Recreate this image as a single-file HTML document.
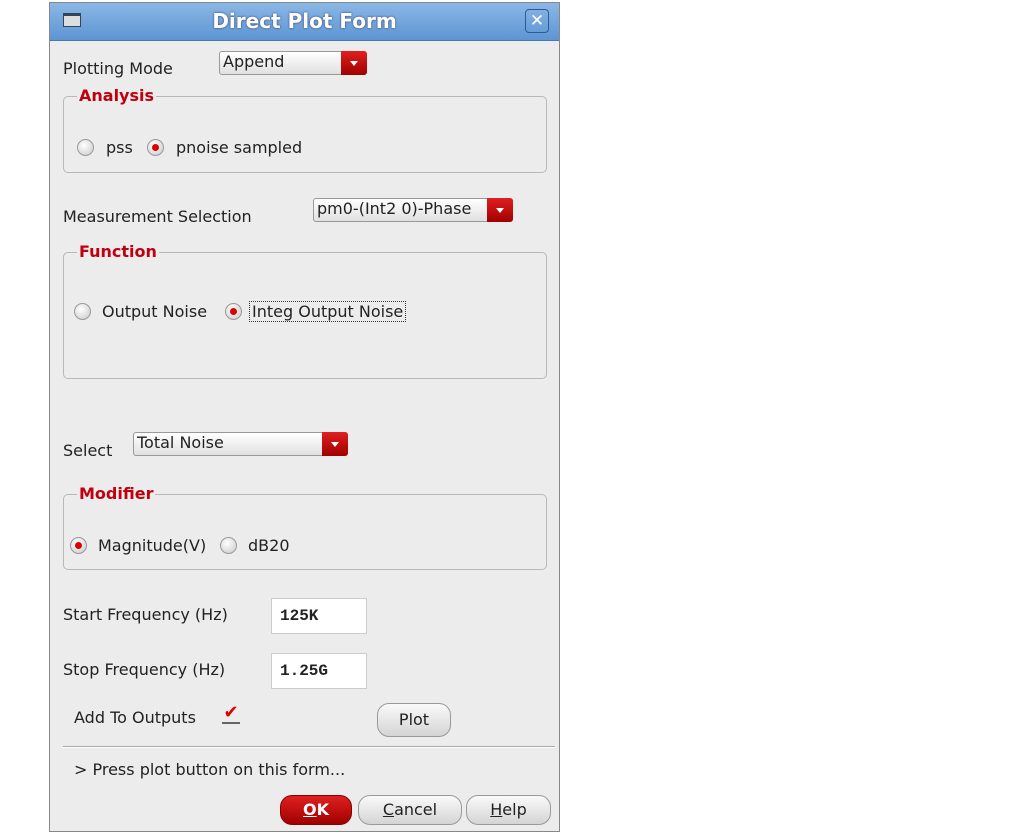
<!DOCTYPE html>
<html><head><style>
body{margin:0;width:1013px;height:840px;background:#fff;position:relative;font-family:"DejaVu Sans","Liberation Sans",sans-serif;font-size:16px;color:#222;overflow:hidden}
.a{position:absolute}
#win{left:49px;top:2px;width:511px;height:830px;background:#ececec;border:1px solid #888;box-sizing:border-box}
#title{left:50px;top:3px;width:509px;height:37px;background:linear-gradient(#8ab7e6,#5d95d3);border-bottom:1px solid #4a78b0}
.lbl{white-space:nowrap}
.grp{border:1px solid #b8b8b8;border-radius:5px}
.gt{color:#c00010;font-weight:bold;background:#ececec;padding:0 2px}
.combo{border:1px solid #999;border-radius:3px;background:linear-gradient(#fff,#e0e0e0);height:24px;box-sizing:border-box;padding-left:3px;line-height:20px}
.combo .ar{position:absolute;right:-1px;top:-1px;width:26px;height:24px;background:linear-gradient(#e02020,#a00000);border-radius:0 3px 3px 0}
.combo .ar:after{content:"";position:absolute;left:9px;top:10px;border:4px solid transparent;border-top:5px solid #fff}
.rad{width:17px;height:17px;border-radius:50%;border:1px solid #999;background:radial-gradient(circle at 40% 35%,#fff,#c8c8c8);box-sizing:border-box}
.rad.on:after{content:"";position:absolute;left:4px;top:4px;width:7px;height:7px;border-radius:50%;background:#d00}
.inp{background:#fff;border:1px solid #ccc;font-family:"Liberation Mono",monospace;font-weight:bold;font-size:16px;padding-left:8px;line-height:34px;box-sizing:border-box}
.btn{border:1px solid #999;border-radius:12px;background:linear-gradient(#fafafa,#d4d4d4);text-align:center;box-sizing:border-box}
</style></head><body>
<div id="win" class="a"></div>
<div id="title" class="a"></div>
<div class="a" style="left:63px;top:13px;width:18px;height:14px;border:1px solid #345;background:#ddd;box-sizing:border-box;border-top:3px solid #345"></div>
<div class="a lbl" style="left:50px;width:509px;top:9px;text-align:center;color:#fff;font-weight:bold;font-size:20px;text-shadow:0 0 2px #335">Direct Plot Form</div>
<div class="a" style="left:525px;top:9px;width:24px;height:24px;border:1px solid #2b5c96;border-radius:4px;box-sizing:border-box;color:#fff;font-weight:bold;text-align:center;line-height:22px;font-size:17px">✕</div>

<div class="a lbl" style="left:63px;top:59px">Plotting Mode</div>
<div class="a combo" style="left:219px;top:51px;width:148px">Append<div class="ar"></div></div>

<div class="a grp" style="left:63px;top:96px;width:482px;height:75px"></div>
<div class="a gt lbl" style="left:77px;top:86px">Analysis</div>
<div class="a rad" style="left:77px;top:139px"></div><div class="a lbl" style="left:106px;top:138px">pss</div>
<div class="a rad on" style="left:147px;top:139px"></div><div class="a lbl" style="left:176px;top:138px">pnoise sampled</div>

<div class="a lbl" style="left:63px;top:207px">Measurement Selection</div>
<div class="a combo" style="left:313px;top:198px;width:200px">pm0-(Int2 0)-Phase<div class="ar"></div></div>

<div class="a grp" style="left:63px;top:252px;width:482px;height:125px"></div>
<div class="a gt lbl" style="left:77px;top:242px">Function</div>
<div class="a rad" style="left:74px;top:303px"></div><div class="a lbl" style="left:102px;top:302px">Output Noise</div>
<div class="a rad on" style="left:225px;top:303px"></div><div class="a lbl" style="left:249px;top:301px;border:1px dotted #333;padding:0 2px">Integ Output Noise</div>

<div class="a lbl" style="left:63px;top:441px">Select</div>
<div class="a combo" style="left:133px;top:432px;width:215px">Total Noise<div class="ar"></div></div>

<div class="a grp" style="left:63px;top:494px;width:482px;height:74px"></div>
<div class="a gt lbl" style="left:77px;top:484px">Modifier</div>
<div class="a rad on" style="left:70px;top:537px"></div><div class="a lbl" style="left:98px;top:536px">Magnitude(V)</div>
<div class="a rad" style="left:220px;top:537px"></div><div class="a lbl" style="left:248px;top:536px">dB20</div>

<div class="a lbl" style="left:63px;top:605px">Start Frequency (Hz)</div>
<div class="a inp" style="left:271px;top:598px;width:96px;height:36px">125K</div>
<div class="a lbl" style="left:63px;top:660px">Stop Frequency (Hz)</div>
<div class="a inp" style="left:271px;top:653px;width:96px;height:36px">1.25G</div>

<div class="a lbl" style="left:74px;top:708px">Add To Outputs</div>
<div class="a" style="left:222px;top:704px;width:18px;height:18px;border-bottom:2px solid #666;color:#d00;font-size:18px;line-height:18px;font-weight:bold;text-align:center">✔</div>
<div class="a btn" style="left:377px;top:703px;width:74px;height:34px;line-height:32px">Plot</div>

<div class="a" style="left:63px;top:746px;width:492px;height:0;border-top:1px solid #aaa;border-bottom:1px solid #fff"></div>
<div class="a lbl" style="left:74px;top:760px">&gt; Press plot button on this form...</div>

<div class="a btn" style="left:280px;top:795px;width:72px;height:30px;line-height:28px;background:linear-gradient(#e02020,#a00000);border-color:#800;color:#fff;font-weight:bold"><u>O</u>K</div>
<div class="a btn" style="left:358px;top:795px;width:104px;height:30px;line-height:28px"><u>C</u>ancel</div>
<div class="a btn" style="left:466px;top:795px;width:85px;height:30px;line-height:28px"><u>H</u>elp</div>
</body></html>
